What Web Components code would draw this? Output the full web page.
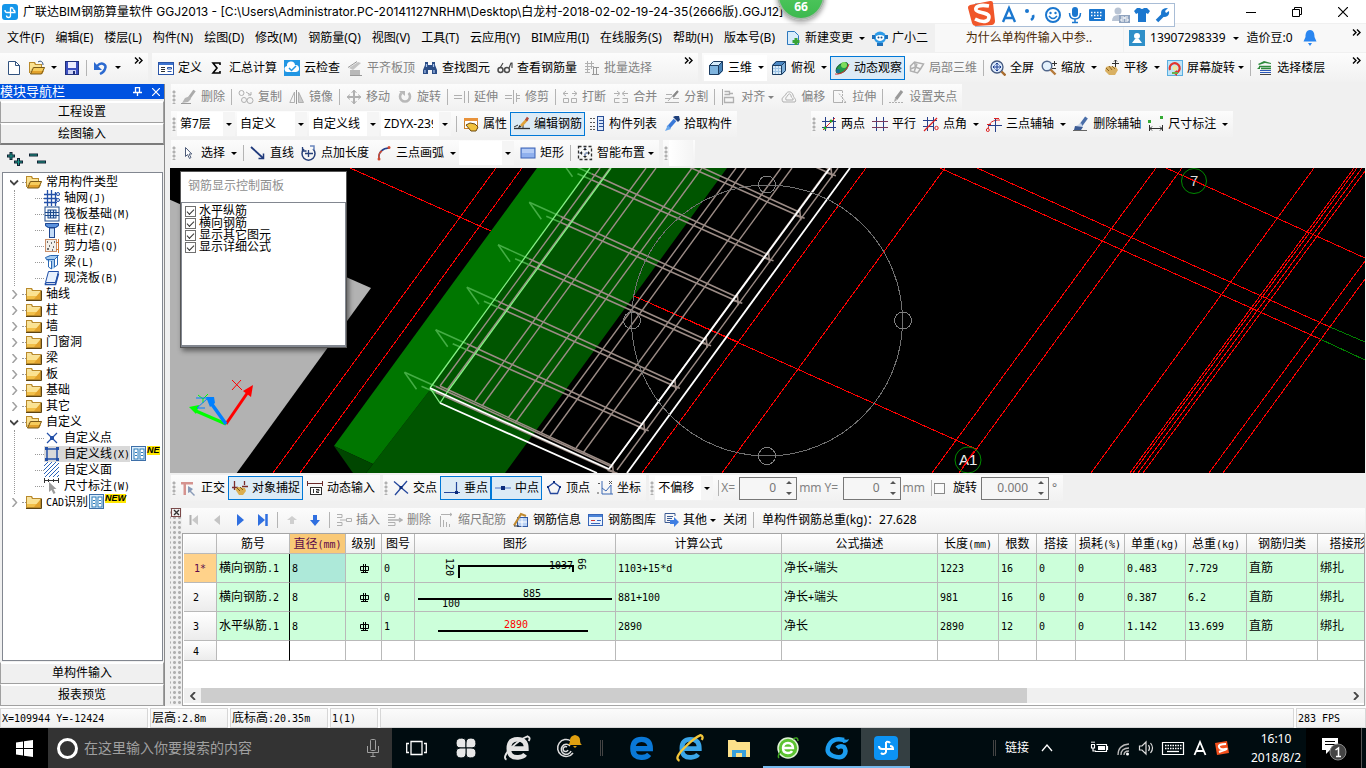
<!DOCTYPE html>
<html lang="zh-CN">
<head>
<meta charset="utf-8">
<title>广联达BIM钢筋算量软件 GGJ2013</title>
<style>
html,body{margin:0;height:100%}
body{display:flex;flex-direction:column;min-height:100vh;overflow:hidden;background:#f0f0f0;color:#000;font:12px/16px "Noto Sans","Noto Sans CJK SC",sans-serif;--sep:#b4b4b4}
main{flex:1;display:grid;grid-template-columns:165px minmax(0,1fr);gap:5px;min-height:0}
.work{display:flex;flex-direction:column;min-width:0;min-height:0}
.strip{display:flex;height:31px;flex:none;background:#f0f0f0}
.strip.files{display:grid;grid-template-columns:148px 546px 1fr;gap:4px}
.row{display:flex;box-sizing:border-box;gap:4px;height:27px;padding-left:1px;flex:none}
.row.far{gap:74px}
.row.tall{height:30px;padding-top:2px}
.row.snap{height:31px;margin-bottom:4px;gap:3px;padding-top:2px}
</style>
</head>
<body>
<title-bar></title-bar>
<menu-bar></menu-bar>
<div class="strip files">
  <tool-group plain more>
    <tool-button icon="new" title="新建"></tool-button><tool-button icon="open" title="打开" drop="wide"></tool-button><tool-button icon="save" title="保存"></tool-button><tool-sep></tool-sep><tool-button icon="undo" title="撤销" drop="wide"></tool-button>
  </tool-group>
  <tool-group plain more>
    <tool-button icon="define">定义</tool-button><tool-button icon="sum">汇总计算</tool-button><tool-button icon="cloud">云检查</tool-button><tool-button icon="flat" disabled>平齐板顶</tool-button><tool-button icon="binoc">查找图元</tool-button><tool-button icon="glasses">查看钢筋量</tool-button><tool-button icon="batch" disabled>批量选择</tool-button>
  </tool-group>
  <tool-group plain more>
    <tool-button icon="cube" drop="wide" field>三维</tool-button><tool-button icon="cube2" drop="wide">俯视</tool-button><tool-button icon="orbit" active>动态观察</tool-button><tool-button icon="part3d" disabled>局部三维</tool-button><tool-sep></tool-sep><tool-button icon="fit">全屏</tool-button><tool-button icon="zoom" drop="wide">缩放</tool-button><tool-button icon="pan" drop="wide">平移</tool-button><tool-button icon="turn" drop="tight">屏幕旋转</tool-button><tool-sep></tool-sep><tool-button icon="floors">选择楼层</tool-button>
  </tool-group>
</div>
<main>
  <nav-panel></nav-panel>
  <section class="work">
    <div class="row">
      <tool-group>
        <tool-button icon="brush" disabled>删除</tool-button><tool-sep></tool-sep><tool-button icon="copy" disabled>复制</tool-button><tool-button icon="mirror" disabled>镜像</tool-button><tool-sep></tool-sep><tool-button icon="move" disabled>移动</tool-button><tool-button icon="rotate" disabled>旋转</tool-button><tool-sep></tool-sep><tool-button icon="extend" disabled>延伸</tool-button><tool-button icon="trim" disabled>修剪</tool-button><tool-sep></tool-sep><tool-button icon="break" disabled>打断</tool-button><tool-button icon="join" disabled>合并</tool-button><tool-button icon="split" disabled>分割</tool-button><tool-sep></tool-sep><tool-button icon="align" drop="tight" disabled>对齐</tool-button><tool-button icon="offset" disabled>偏移</tool-button><tool-button icon="stretch" disabled>拉伸</tool-button><tool-sep></tool-sep><tool-button icon="grip" disabled>设置夹点</tool-button>
      </tool-group>
    </div>
    <div class="row far">
      <tool-group>
        <combo-box label="楼层" value="第7层" style="--w:58px"></combo-box><combo-box label="构件类型" value="自定义" style="--w:70px"></combo-box><combo-box label="构件" value="自定义线" style="--w:70px"></combo-box><combo-box label="构件名称" value="ZDYX-239" style="--w:70px"></combo-box><tool-sep></tool-sep><tool-button icon="props">属性</tool-button><tool-button icon="editbar" active>编辑钢筋</tool-button><tool-button icon="list">构件列表</tool-button><tool-button icon="picker">拾取构件</tool-button>
      </tool-group>
      <tool-group>
        <tool-button icon="twopt">两点</tool-button><tool-button icon="parallel">平行</tool-button><tool-button icon="ptangle" drop="wide">点角</tool-button><tool-button icon="threeaxis" drop="wide">三点辅轴</tool-button><tool-button icon="erase">删除辅轴</tool-button><tool-button icon="dim" drop="wide">尺寸标注</tool-button>
      </tool-group>
    </div>
    <div class="row tall">
      <tool-group>
        <tool-button icon="cursor" drop="wide">选择</tool-button><tool-sep></tool-sep><tool-button icon="line">直线</tool-button><tool-button icon="ptlen">点加长度</tool-button><tool-button icon="arc" drop="wide">三点画弧</tool-button><combo-box label="弧线方式" value="" style="--w:55px"></combo-box><tool-button icon="rect">矩形</tool-button><tool-sep></tool-sep><tool-button icon="smart" drop="tight">智能布置</tool-button>
      </tool-group>
      <tool-group blank></tool-group>
    </div>
    <model-view></model-view>
    <div class="row snap">
      <tool-group>
        <tool-button icon="ortho">正交</tool-button><tool-button icon="osnap" active>对象捕捉</tool-button><tool-button icon="dyn">动态输入</tool-button>
      </tool-group>
      <tool-group>
        <tool-button icon="cross">交点</tool-button><tool-button icon="perp" active>垂点</tool-button><tool-button icon="mid" active>中点</tool-button><tool-button icon="vertex">顶点</tool-button><tool-button icon="coord">坐标</tool-button>
      </tool-group>
      <tool-group>
        <combo-box label="偏移方式" value="不偏移" style="--w:58px"></combo-box><tool-sep></tool-sep><spin-field label="X=" value="0" unit="mm"></spin-field><spin-field label="Y=" value="0" unit="mm"></spin-field><tool-sep></tool-sep><rotate-field></rotate-field>
      </tool-group>
    </div>
    <rebar-panel></rebar-panel>
  </section>
</main>
<status-bar></status-bar>
<task-bar></task-bar>

<script>
const L = (d, c, w = 1, x = '') => `<path d="${d}" fill="none" stroke="${c}" stroke-width="${w}" ${x}/>`;
const F = (d, c, x = '') => `<path d="${d}" fill="${c}" ${x}/>`;
const R = (x, y, w, h, f, s) => `<rect x="${x}" y="${y}" width="${w}" height="${h}" fill="${f}" ${s ? `stroke="${s}"` : ''}/>`;
const C = (x, y, r, f, s = 'none', w = 1) => `<circle cx="${x}" cy="${y}" r="${r}" fill="${f}" stroke="${s}" stroke-width="${w}"/>`;
const G = '#b0b0b0', B = '#2a56b0', N = '#27408b', K = '#303030';
const folder = F('M0 2h6l1 2h8v10H0z', '#b98a2c') + F('M1 3h4l1 2h8v1H1z', '#f7e3a0') + F('M1 6h13v4H1z', '#fbe291') + F('M1 10h13v3H1z', '#f2c04a') + F('M8 13l6-7v7z', '#e2a22c') + L('M0 14.500h15.500V4.500', '#5d4412');
const folderOpen = F('M0 2h6l1 2h6v3H4L1 13H0z', '#b98a2c') + F('M1 3h4l1 2h6v2H4l-3 5z', '#fbe291') + F('M4 7h12l-3 7H1z', '#f6cc5c') + F('M3 11h12l-2 3H1z', '#e2a22c') + L('M4.500 7.500h11l-3 6.500h-11z', '#7a5a18');
const cube = (a, b, c) => F('M1 5l4-4h10l-4 4z', a) + F('M1 5h10v10H1z', b) + F('M11 5l4-4v10l-4 4z', c) + L('M1.500 5.500h9v9h-9zM1.500 5.500l4-4h9l-4 4M14.500 1.500v9l-4 4', '#1c3c60');
const ICONS = {
  logo: `<rect width="16" height="16" rx="3" fill="#1496ea"/>` + L('M8.500 3.500v8a2 2 0 0 1-4 0M3 6q0 2.500 2 2.500h8q0-2.500-2-2.500M8.500 3.500q3 0 2.500 2', '#fff', 1.300),
  new: F('M2 1h8l4 4v10H2z', '#fff') + L('M2.500 1.500h7l4 4v9h-11zM9.500 1.500v4h4', '#31527f'),
  open: folderOpen + L('M9 2c3-2 5 0 5 3', '#31527f'),
  save: R(1.5, 1.5, 13, 13, '#3c4fc0', '#20307c') + R(4, 2, 8, 6, '#eef') + R(4, 10, 8, 4, '#cdd3f4') + R(9, 11, 2, 3, '#20307c'),
  undo: L('M4 6c5-5 10-1 8 3-1 3-3 4-5 5', '#2c6ad0', 2.400) + F('M1 2v8h8z', '#2c6ad0'),
  define: R(.5, 2.5, 15, 12, '#fff', '#2b55a8') + R(1, 3, 14, 2, '#3d73cf') + L('M3 7.500h4M3 9.500h4M3 11.500h4', K) + L('M9.500 7.500h4v1.500h-4zM9.500 11.500h4', '#2b55a8'),
  sum: L('M11 5V3H4l4 5-4 5h7v-2', '#000', 1.600),
  cloud: R(0, 0, 16, 16, '#2196e3') + F('M4 12a3 3 0 0 1-1-6 4 4 0 0 1 8-1 3.500 3.500 0 0 1 1 7z', '#fff') + L('M5 8l2.500 2.500L12 6', '#2196e3', 1.500),
  flat: F('M2 8l9-6 3 1-8 7z', '#c4c4c4') + R(3, 10, 10, 5, '#b9b9b9') + L('M1 7.500l9-6M3 15.500h12', '#999'),
  binoc: F('M3 2h3v3h4V2h3v3l2 5v4h-5v-4H6v4H1v-4l2-5z', '#2b4d86') + L('M3 10v3M12 10v3M4.500 4v3M11.500 4v3', '#a9c4ee', 1.200),
  glasses: C(3.500, 10, 2.500, 'none', '#4a4a4a', 1.500) + C(10, 10, 2.500, 'none', '#4a4a4a', 1.500) + L('M3 8l3-5M12 8l2-5 1 0v5', '#4a4a4a', 1.200),
  batch: L('M1 3.500h9M1 6.500h9M1 9.500h5M3.500 1v11M7.500 1v8M1 12.500h5', G) + L('M9.500 7v7M12.500 7v7M8 14.500h7M9 7.500h6', '#999'),
  cube: cube('#d6ecfa', '#7fb4de', '#4a84b8'), cube2: cube('#4b88c4', '#d9ebf8', '#7fb0da') + L('M4.500 6v8M7.500 6v8M2 8.500h8M2 11.500h8', '#9ec4e6'),
  orbit: `<ellipse cx="8" cy="8" rx="7" ry="4" transform="rotate(-40 8 8)" fill="#229a4c" stroke="#0c5f2a"/>` + C(10, 5, 3, '#7ddc5c') + L('M1 14c5 1 12-3 14-10', '#d33') + C(4, 11, 2, '#186d9c'),
  part3d: L('M1.500 6l4-4 9 2-3 5-3 4-7-2zM5.500 2l1 5 5 2M1.500 9l5-2M8 4l-3 8', G, 1.500),
  fit: C(7, 7, 6, '#dce9fb', '#44597f', 1.300) + L('M7 3v8M3 7h8M5.500 4.500L7 3l1.500 1.500M5.500 9.500L7 11l1.500-1.500M4.500 5.500L3 7l1.500 1.500M9.500 5.500L11 7 9.500 8.500', '#1c3f94') + L('M11.500 11.500l4 4', '#a86c2e', 2.400),
  zoom: C(6, 6, 4.800, '#e4f1fc', '#51678c', 1.400) + L('M9.500 9.500l5 5', '#b57939', 2.400) + L('M11 3.500h5M13.500 1v5M11 8.500h4', '#333'),
  pan: F('M2 7l3-1 7 1 2 3-3 5H5L1 11z', '#d9b062') + L('M2 8l3 3M5 6l3 4M8 6l3 3', '#8c6523') + L('M11.500 0v7M8 3.500h7M10 1.500l1.500-1.500L13 1.500', K),
  turn: R(.5, .5, 15, 15, '#bfe4f7', '#5aaee0') + L('M3 10a5 5 0 1 1 6 3', '#e2342b', 2.200) + F('M10 10l-4 3 4 3z', '#e2342b') + C(8, 8, 2.500, '#f0e8a0') + F('M5 12h6v2H5z', '#6ab04c'),
  floors: F('M1 4l6-3 7 2v1l-6-1-6 2z', '#2f8a3c') + L('M2 6.500h12M4 8.500h10', '#2f8a3c', 1.400) + L('M3 10.500h11M3 12.500h11', '#2b58b8') + L('M3 14.500h11', '#444') + F('M0 9l3-3v3z', '#2f8a3c'),
  brush: L('M13.500 1.500l-5 7', '#aaa', 3) + F('M9 7L4 9l-3 5 6-1 3-3z', '#b5b5b5') + L('M0 14.500h10', '#9a9a9a'),
  copy: C(3.500, 4, 2.500, 'none', G) + C(6, 11, 2.500, 'none', G) + C(12, 11.500, 3, 'none', G) + L('M8 3l5 3M13 3v3h-3', G),
  mirror: L('M5.500 3v10.500H.8z', G) + L('M7.500 1v14', '#999') + F('M9.500 3v10.500h5z', '#ccc') + L('M9.500 3v10.500h5z', G),
  move: L('M8 2v12M2 8h12', G, 2) + L('M5.500 4L8 1l2.500 3M5.500 12L8 15l2.500-3M4 5.500L1 8l3 2.500M12 5.500L15 8l-3 2.500', G),
  rotate: L('M4.500 4a5 5 0 1 0 7 0', '#b8b8b8', 2.600) + F('M2 2h6v5z', '#b8b8b8'),
  extend: L('M0 6.500h8M0 9.500h8M10.500 2v12M14.500 2v12', G),
  trim: L('M0 6.500h7M0 9.500h7M8.500 1v14M11.500 4v9M12 6.500h3M12 9.500h3', G),
  break: L('M1 4.500h5M4 2l-3 2.500L4 7M10 4.500h5M12 2l3 2.500L12 7', G) + L('M1.500 9.500h5v4h-5zM14.500 9.500h-5v4h5z', G),
  join: L('M1 4.500h5M4 2l3 2.500L4 7M10 4.500h5M12 2L9 4.500 12 7', G) + L('M6.500 9.500h-5v4h5M9.500 9.500h5v4h-5', G),
  split: L('M1 13.500h14M1 9.500h5M9 9.500h6M13 2L4 12M2 5.500h6', G) + L('M14 2L9 8', '#888', 2),
  align: L('M1.500 0v16', '#aaa') + L('M3.500 2.500h5v3h-5M3.500 8.500h9v5h-9zM12 4.500H8', G, 1.300),
  offset: L('M2 13c-3-5 2-5 3-8s6-3 7 1 4 4 2 7z', G) + L('M5 11c-1-3 1-3 2-5s3-1 3 1 3 2 2 4z', G),
  stretch: L('M1.500 13.500v-12h9M1.500 13.500h9', G) + L('M10.500 2v11M7 4.500l7 9M6 13.500h9', G, 1, 'stroke-dasharray="2 1"'),
  grip: L('M0 13.500h15', G, 1, 'stroke-dasharray="2 1"') + L('M13 2L7 10', '#999', 3) + F('M6 9l-1 4 3-2z', '#aaa'),
  props: R(1.5, 2.5, 13, 10, '#fff', '#c9822e') + R(1, 2, 14, 3, '#e8923a') + F('M3 9l4-2 5 1 3 3-2 4H8z', '#f2c23c') + L('M3 9l4-2 5 1 3 3-2 4H8z', '#6d4a12'),
  editbar: L('M0 12.500h16', K, 1.300) + L('M0 11l4-2M9 12V9', K) + L('M13.500 3L7 10', '#e0a33c', 2.600) + L('M14 1.500l-2 3', '#b34a3a', 2.600) + F('M4 12l1.500-3 2 2z', '#222'),
  list: R(8.5, .5, 6, 14, '#dce8fa', '#2a4f96') + L('M10 4.500h4M10 7.500h4M10 10.500h4', '#2a4f96') + L('M1 2.500h5M1 6.500h5M1 10.500h5M1 13.500h5', '#555', 1, 'stroke-dasharray="2 1"'),
  picker: L('M11 4L4 12', '#3878d8', 3.500) + F('M9 1l5 5 2-2-1-4-3-.5z', '#1e3f7a') + F('M4 9l-3 6 6-2z', '#6aa8ec'),
  twopt: L('M4.500 1v14M12.500 1v14M1 5.500h14M1 11.500h14', N) + L('M2 14L14 2', '#d22') + C(10, 5, 1.500, '#2a2') + C(4, 12, 1.500, '#2a2'),
  parallel: L('M4.500 1v14M11.500 1v14', N) + L('M0 5.500h16M0 11.500h16', '#7a3a5a'),
  ptangle: L('M4.500 1v14M10.500 1v14M0 4.500h14M0 10.500h10', N) + L('M1 15L14 2', '#d22', 1.300) + C(13.500, 12, 1.700, 'none', '#d22'),
  threeaxis: L('M2 13C3 6 7 4 14 4', '#d22') + L('M9.500 2v14M2 9.500h14', N) + L('M1 8.500h4M8 2.500h5', '#d22') + C(1.800, 14, 1.500, 'none', '#d22'),
  erase: L('M13.500 1.500L8 9', '#4a6ea8', 3.400) + F('M8 7l-5 3 1 3 6-2z', '#c9d6ea') + F('M2 10l-1 4 7 0 2-3z', '#3b5b94') + L('M0 14.500h14', '#666'),
  dim: L('M1.500 9v6M14.500 9v6M2 12.500h12M4 10.500l-2 2 2 2M12 10.500l2 2-2 2', K) + R(0, 4, 3, 3, '#3a3') + R(12, 0, 3, 3, '#3a3'),
  cursor: F('M4 2v10l2.500-2 2 4 1.500-1-2-3.500h3z', '#fff') + L('M4.500 2.500v9l2-2 2 4 1.500-1-2-3.500h2.800z', '#4d5b78'),
  line: L('M1 2l12 11', '#203a7c', 1.800) + L('M8.500 13.500h5v-5', '#203a7c', 1.500),
  ptlen: L('M3 4a6.500 6.500 0 1 0 9 0', '#27407a', 1.500) + L('M1.500 2v4h4M7.500 5v7M4 8.500h8', '#27407a', 1.300) + L('M9 1h4v4', '#6a86bd', 1.500),
  arc: L('M3 14C2 7 7 3 13 3', '#25408a', 1.500) + L('M3 14C2 10 4 7 6 6', '#d24a30', 1.500) + C(13, 2.500, 1.500, '#d24a30') + C(3, 14, 1.500, '#d24a30'),
  rect: R(1, 3, 14, 10, '#8fb0ee', '#3c62b4') + R(2, 4, 12, 4, '#b4cbf6'),
  smart: L('M1.500 1.500h13v13h-13z', K, 1.300, 'stroke-dasharray="3 2"') + L('M8 2.500v11M2.500 8h11', '#1e3f7a', 1, 'stroke-dasharray="3 3"') + F('M6 5h4L8 3zM6 11h4l-2 2zM5 6v4L3 8zM11 6v4l2-2z', '#222'),
  ortho: F('M0 2h12v2.500H5V15H2.500V4.500H0z', '#d5938f') + F('M7 6v7l2-1 4 4 1-1-4-4 2-2z', '#8a9bb8'),
  osnap: L('M2.500 1v9M12.500 1v4M0 7.500h6M10 6.500h6', '#7b2e2e', 1.300) + F('M3 9l3-2 7 1 1 3-3 4H7z', '#dcae50') + L('M5 8l3 3M8 7l3 3', '#7c5a1b'),
  dyn: L('M0 3.500h16M.500 1v5M15.500 1v5', '#6b2a2a') + R(3.5, 7.5, 11, 7, '#fff', K) + L('M6.500 9v4M9 9.500h3v1.500h-2.500v1.500H12', K),
  cross: L('M1 1.500l14 12M14 1l-12 14', '#25479c', 1.300) + R(6.500, 6, 3, 3, '#0c2c7c'),
  perp: L('M0 12.500h16M12.500 2v10', '#25479c', 1.200) + R(11, 11, 3, 3, '#0c2c7c'),
  mid: L('M0 8h16', '#4b72c4', 1) + R(6, 6, 4, 4, '#0c2c7c'),
  vertex: L('M8 2.500l6 4.500-2.500 6.500h-7L2 7z', '#25479c', 1.300) + R(7, 1, 2, 2, '#0c2c7c') + R(1, 6, 2, 2, '#0c2c7c') + R(13, 6, 2, 2, '#0c2c7c'),
  coord: L('M5 1v13h11M5 8l4 3 5-6v9', '#3a68b4') + L('M1 3l1 1 1-1M0 13h2M12 1l3 3M15 1l-3 3', '#555'),
  first: L('M4.500 3v10', G, 2) + F('M12 3v10L6 8z', '#c8c8c8'), prev: F('M11 3v10L5 8z', '#c4c4c4'),
  next: F('M5 2v12l7-6z', '#2f6fe0'), last: F('M3 2v12l7-6z', '#2f6fe0') + L('M11.500 2v12', '#2f6fe0', 2.500),
  up: F('M8 4l5 4h-3v4H6V8H3z', '#cfcfcf'), down: F('M8 14L3 8h3V3h4v5h3z', '#2f6fe0'),
  insrow: L('M1 2.500h5v3H1M1 10.500h5v3H1M4 8h3M10.500 6.500h5v3h-5zM7 8h3', G), delrow: L('M1 2.500h7v3H1M1 10.500h7v3H1', G) + L('M1 8h14M12 6l3 2-3 2', G, 1.400),
  scale: L('M2.500 4v11M5.500 8v7M8.500 10v5M11.500 12v3M3 2.500h11M12 1l2 1.500L12 4', G),
  info: R(4.5, 5.5, 10, 9, '#b9d1f4', '#3159a3') + L('M9 6v9M5 10h9', '#fff') + L('M1 13.500L8 2l5 2', '#c08a30', 2.200) + L('M1 14h5', '#333'),
  lib: R(.5, 2.5, 14, 11, '#eaf2fd', '#3766b8') + R(1, 3, 13, 2, '#4c84d8') + L('M3 8.500h4', '#c33') + L('M9 8.500h4M3 11.500h9', '#3766b8'),
  other: L('M12 4v-2.500h-10v9h5M4 4.500h6M4 6.500h5M4 8.500h3', '#3c5b94') + F('M7 8h4V5l5 5-5 5v-3H7z', '#3f7ee2'),
  grid: L('M0 4.500h16M0 8.500h13M0 12.500h13M3.500 0v16M7.500 0v16M11.500 2v14', '#2350a8', 1.300) + C(14, 4, 1.500, '#fff', '#2350a8') + C(14, 10, 1.500, '#fff', '#2350a8'),
  raft: R(1, 1, 14, 14, '#fff', '#1d4a8c') + R(4, 4, 8, 8, '#cfe0f4', '#1d4a8c') + L('M6.500 4v8M9.500 4v8M1 6.500h14M1 9.500h14', '#1d4a8c'),
  column: F('M1 1h14v3l-3 2H4L1 4z', '#5b92dd') + L('M1.500 1.500h13v2l-3 2h-7l-3-2z', '#1e4690') + R(5.5, 6, 5, 9.500, '#c3dcf8', '#1e4690'),
  wall: R(1.5, 1.5, 11, 12, '#f1efe9', '#c98f6a') + L('M3 4h1M7 5h1M5 8h1M9 9h1M3 11h2M8 12h1M10 4h1', '#444', 1.400) + L('M14.500 1v14M12 4.500h3M12 11.500h3', '#d27b32'),
  beam: F('M1 4l5-3h9l-4 4v9l-3 1V8L3 7z', '#a7cbee') + L('M1.500 3.500l5-2h8l-4 4h-8zM4.500 6v7l3 2V7M10.500 5v8l3-2V3', '#2a68b4'),
  slab: F('M4 1h11l-3 12H1z', '#e7f1fd') + L('M4.500 1.500h10l-3 11h-10z', '#2350a8') + L('M1.500 13v1.500h10l3-11', '#2350a8', 1.600),
  pt: L('M3 3l10 10M13 3L3 13', '#2350a8', 1.200) + R(6, 6, 4, 4, '#2350a8'),
  ln: L('M3 3h10v10H3z', '#2350a8', 1.500) + [1, 12].map(x => [1, 12].map(y => R(x, y, 3, 3, '#2350a8')).join('')).join(''),
  area: L('M0 4l4-4M0 8l8-8M0 12l12-12M1 15L15 1M5 15L15 5M9 15l6-6M13 15l2-2', '#2a62b8'),
  dimw: L('M0 2.500h15M.500 0v5M14.500 0v5M4.500 1v3M9.500 1v3', '#333') + F('M5 4v10l2.500-2 2 4 2-1-2-4h3z', '#9a9a9a'),
  folder, folderOpen,
  book: R(.5, .5, 14, 14, '#dceefb', '#3d6fa8') + R(3, 3, 4, 10, '#fff', '#2a7ab8') + R(9, 3, 4, 10, '#fff', '#2a7ab8') + L('M4 6.500h2M4 9.500h2M10 6.500h2M10 9.500h2', '#2a7ab8'),
  adddoc: F('M2 1h8l4 4v10H2z', '#d8ecfb') + L('M2.500 1.500h7l4 4v9h-11z', '#2d78bd') + L('M11 8v7M7.500 11.500h7', '#36a336', 3),
  robot: C(8, 7.500, 6, '#2e9be8') + F('M4 6q4-2 8 0v3q-4 4-8 0z', '#fff') + C(6.500, 7.500, 1, '#17528a') + C(9.500, 7.500, 1, '#17528a') + F('M5 13h6v3H5zM0 5h3v4H0zM13 5h3v4h-3z', '#1f6fb8'),
  user: R(0, 0, 16, 16, '#2f8fc8') + C(8, 6, 3, '#fff') + F('M3 13l3-4h4l3 4z', '#fff'),
  bell: F('M8 0c4 0 4.500 4 4.500 7l2 4.500h-13l2-4.500C3.500 4 4 0 8 0zM6 13h4l-2 3z', '#2a86f0')
};

const sheetBase = `:host,*{box-sizing:border-box}button,input,select{font:inherit;color:inherit;margin:0}button{border:0;background:none;padding:0}svg{display:block}`;
const simsun = s => String(s).replace(/[\x20-\x7e]+/g, m => `<span class="m">${m}</span>`);
const mono = `.m{font:10px/12px "DejaVu Sans Mono",monospace;white-space:pre}`;
const attrs = (el, n, d = '') => el.getAttribute(n) ?? d;
function component(name, css, html) {
  customElements.define(name, class extends HTMLElement {
    connectedCallback() {
      if (this.shadowRoot) return;
      const t = document.createElement('template');
      t.innerHTML = `<style>${sheetBase}${css}</style>${typeof html === 'function' ? html(this) : html}`;
      this.attachShadow({ mode: 'open' }).append(t.content.cloneNode(true));
    }
  });
}
component('ui-icon', ':host{display:block;width:16px;height:16px;flex:none}',
  el => `<svg width="16" height="16" viewBox="0 0 16 16" aria-hidden="true">${ICONS[attrs(el, 'name')] || ''}</svg>`);

const arrowCss = `.arrow{border:3px solid transparent;border-top-color:currentColor;border-bottom:0;width:6px;height:0;flex:none}`;
component('tool-button', `:host{display:block;flex:none}
button{display:flex;align-items:center;height:26px;border:1px solid transparent;padding:0 2px 0 3px;white-space:nowrap;color:#000}
.txt{padding-left:4px}:host(:not([icon])) .txt{padding-left:0}.txt.none{display:none}
:host([disabled]) button{color:#838383}
:host([active]) button{background:#dcebf6;border-color:#0078d7;height:24px}
:host([field]) button{background:#fff}
${arrowCss}:host([drop=wide]) .arrow{margin:0 0 0 6px}:host([drop=tight]) .arrow{margin:0 0 0 3px}`,
  el => `<button type="button" ${el.hasAttribute('disabled') ? 'disabled' : ''} ${el.title ? `aria-label="${el.title}"` : ''}>${el.hasAttribute('icon') ? `<ui-icon name="${attrs(el, 'icon')}"></ui-icon>` : ''}<span class="txt ${el.textContent ? '' : 'none'}"><slot></slot></span>${el.hasAttribute('drop') ? '<span class="arrow"></span>' : ''}</button>`);
component('tool-sep', ':host{display:block;width:1px;height:16px;margin:0 2px 0 3px;background:var(--sep);flex:none}', '');
component('tool-group', `:host{display:flex;align-items:center;height:26px;padding-right:2px;background:linear-gradient(#fcfcfc,#f1f1f1);min-width:0}
:host([plain]){padding-left:2px;height:29px;padding-right:5px}
.grip{width:6px;height:14px;flex:none;background:radial-gradient(circle,#b0b0b0 1px,transparent 2px) 0 0/6px 4px}
.more{margin-left:auto;align-self:flex-start;padding-top:4px}
.blank{width:24px;height:26px;background:linear-gradient(90deg,#fff,#f4f4f4)}`,
  el => (el.hasAttribute('plain') ? '' : '<span class="grip"></span>') + '<slot></slot>' + (el.hasAttribute('blank') ? '<span class="blank"></span>' : '') +
    (el.hasAttribute('more') ? `<button class="more" aria-label="更多"><svg width="9" height="7" viewBox="0 0 9 7">${L('M1 .500l3 3-3 3M5 .500l3 3-3 3', '#000', 1.400)}</svg></button>` : ''));
component('combo-box', `:host{display:block;flex:none;width:var(--w);height:24px;position:relative;margin-right:2px}
select{appearance:none;width:100%;height:100%;border:0;border-radius:0;background:linear-gradient(90deg,#fff 0 calc(100% - 12px),#f5f5f5 0);padding:0 18px 0 3px;outline:0}
.arrow{position:absolute;right:3px;top:11px;pointer-events:none}${arrowCss}`,
  el => `<select aria-label="${attrs(el, 'label')}"><option>${attrs(el, 'value')}</option></select><span class="arrow"></span>`);
const spinner = (id, v, w) => `<span class="spin" style="width:${w}px"><input id="${id}" type="text" inputmode="decimal" value="${v}"><svg width="6" height="16" viewBox="0 0 6 16"><path d="M0 4l3-3 3 3zM0 12l3 3 3-3z" fill="#555"/></svg></span>`;
const spinCss = `.spin{display:flex;align-items:center;height:23px;border:1px solid #777;background:#f6f6f6;padding-right:4px;flex:none}.spin input{min-width:0;flex:1;width:0;border:0;background:none;text-align:right;padding:0 10px 0 0;color:#777}`;
component('spin-field', `:host{display:flex;align-items:center;gap:2px;color:#838383;margin-right:3px}label{width:16px;white-space:nowrap}${spinCss}`,
  el => `<label for="v">${attrs(el, 'label')}</label>${spinner('v', attrs(el, 'value'), 58)}<span>${attrs(el, 'unit')}</span>`);
component('rotate-field', `:host{display:flex;align-items:center;color:#000;margin-right:4px}input[type=checkbox]{appearance:none;width:11px;height:11px;border:1px solid #888;background:#fafafa}label{margin:0 4px 0 8px}.deg{margin-left:3px;color:#777}${spinCss}`,
  `<input type="checkbox" id="r"><label for="r">旋转</label>${spinner('a', '0.000', 68)}<span class="deg">°</span>`);

component('title-bar', `:host{display:flex;height:23px;flex:none;background:#fff;align-items:center;position:relative}
h1{font:12px/16px Inter,"Noto Sans CJK SC",sans-serif;margin:0 0 0 5px;flex:1;white-space:nowrap}ui-icon{margin-left:2px}
.win{width:46px;height:22px;display:grid;place-items:center}
.ball{position:absolute;left:777px;top:-30px;width:48px;height:50px;border-radius:50%;background:linear-gradient(#5fd36a,#3cb94e);border:2px solid #a9b7ab;box-shadow:0 2px 5px #0006;color:#fff;font:bold 12px/14px "Noto Sans",sans-serif;text-align:center;padding-top:28px;z-index:3}
.ime{position:absolute;left:967px;top:0;display:flex;align-items:center;z-index:3;width:208px;height:27px}
.ime .bar{position:absolute;inset:3px 0 0 8px;border:1px solid #a9bdd6;background:#fff}
.ime svg{position:relative}`,
  () => `<ui-icon name="logo"></ui-icon><h1>广联达BIM钢筋算量软件 GGJ2013 - [C:\\Users\\Administrator.PC-20141127NRHM\\Desktop\\白龙村-2018-02-02-19-24-35(2666版).GGJ12]</h1>
<div class="ball">66</div>
<div class="ime"><div class="bar"></div><svg width="206" height="27" viewBox="0 0 206 27">
<path d="M3 5L23 1q3-.500 3 2l2 18q0 3-3 4L9 26q-3 0-4-3L1 8q-.500-2 2-3z" fill="#f0562a"/>${L('M22 6C12 4 8 7 9 10s13 2 13 7-6 6-14 2', '#fff', 3.600)}
<g fill="none" stroke="#1b77cf" stroke-width="2.400">${'<path d="M36 22l6-14 6 14M38 18h8"/>'}</g>
${C(60, 11, 2, '#1b77cf')}${L('M66 15q1 3-2 5', '#1b77cf', 2.600)}
${C(86, 15, 7, 'none', '#1b77cf', 2)}${C(83.500, 13, 1.200, '#1b77cf')}${C(88.500, 13, 1.200, '#1b77cf')}${L('M82 16q4 5 8 0', '#1b77cf', 1.500)}
<rect x="105" y="7" width="6" height="10" rx="3" fill="#1b77cf"/>${L('M102.500 13q0 6 5.500 6t5.500-6M108 19v3M105 22.500h6', '#1b77cf', 1.500)}
<rect x="122" y="9" width="16" height="12" rx="1" fill="#1b77cf"/>${L('M124 12.500h12M124 15.500h12', '#fff', 1.500, 'stroke-dasharray="1.500 1.500"')}${L('M127 18.500h7', '#fff')}
${C(151, 11, 3.500, '#b9c4d4')}${F('M145 21q0-6 6-6 3 0 4 1v5z', '#b9c4d4')}${R(152, 15, 11, 8, '#8fa3bf')}${L('M154 17h3v2h-3v2h3M161 17h-3v2h3v2h-3', '#fff')}
${F('M170 8h3q2 2 4 0h3l3 3-2 3-2-1v9h-8v-9l-2 1-2-3z', '#1b77cf')}
${L('M190 21l6-6', '#1b77cf', 3.500)}${F('M201 8l-3 3 1 2 3-2q1 5-4 6-4 0-4-4 0-5 7-5z', '#1b77cf')}</svg></div>
<button class="win" aria-label="最小化"><svg width="10" height="10">${L('M0 5.500h10', '#000')}</svg></button>
<button class="win" aria-label="还原"><svg width="10" height="10">${L('M.500 2.500h7v7h-7zM2.500 2.500v-2h7v7h-2', '#000')}</svg></button>
<button class="win" aria-label="关闭"><svg width="10" height="10">${L('M0 0l10 10M10 0L0 10', '#000', 1.200)}</svg></button>`);

component('menu-bar', `:host{display:flex;height:30px;flex:none;align-items:center;background:#f0f0f0}
nav{display:flex;gap:11px;padding-left:7px;flex:none}button{white-space:nowrap}
.tools{display:flex;align-items:center;margin-left:6px;flex:none}
.ask{flex:0 1 188px;margin-left:4px;height:28px;background:#f8f8f8;text-align:center;color:#4b2a06;line-height:28px;white-space:nowrap;text-decoration:none}
.acct{flex:1;display:flex;align-items:center;gap:5px;height:28px;padding:0 5px;background:#f8f8f8;margin-left:1px}
.acct .arrow{margin:0 3px 0 2px}.acct ui-icon:last-of-type{margin-left:4px}.more{margin-left:auto;align-self:flex-start;padding-top:5px}${arrowCss}`,
  () => `<nav>${['文件(F)', '编辑(E)', '楼层(L)', '构件(N)', '绘图(D)', '修改(M)', '钢筋量(Q)', '视图(V)', '工具(T)', '云应用(Y)', 'BIM应用(I)', '在线服务(S)', '帮助(H)', '版本号(B)'].map(t => `<button>${t}</button>`).join('')}</nav>
<div class="tools"><tool-button icon="adddoc" drop="wide">新建变更</tool-button><tool-button icon="robot">广小二</tool-button></div>
<a class="ask" href="#">为什么单构件输入中参..</a>
<div class="acct"><ui-icon name="user"></ui-icon><span>13907298339</span><span class="arrow"></span><span>造价豆:0</span><ui-icon name="bell"></ui-icon><button class="more" aria-label="更多"><svg width="9" height="7" viewBox="0 0 9 7">${L('M1 .500l3 3-3 3M5 .500l3 3-3 3', '#000', 1.400)}</svg></button></div>`);

const TREE = [['常用构件类型', 'o', [['grid', '轴网(J)'], ['raft', '筏板基础(M)'], ['column', '框柱(Z)'], ['wall', '剪力墙(Q)'], ['beam', '梁(L)'], ['slab', '现浇板(B)']]],
  ['轴线'], ['柱'], ['墙'], ['门窗洞'], ['梁'], ['板'], ['基础'], ['其它'],
  ['自定义', 'o', [['pt', '自定义点'], ['ln', '自定义线(X)', 'NE'], ['area', '自定义面'], ['dimw', '尺寸标注(W)']]], ['CAD识别', '', [], 'NEW']];
component('nav-panel', `:host{display:flex;flex-direction:column;min-height:0;border-right:1px solid #8a8a8a}
header{display:flex;align-items:center;height:15px;background:#0052e0;color:#fff;font-size:13px;line-height:15px;gap:10px;padding-right:4px;margin-bottom:2px;flex:none}header span{flex:1}
.tab{height:22px;flex:none;border:1px solid #a0a0a0;border-top-color:#fff;background:#f0f0f0;box-shadow:inset 0 1px #fff}
.tab.on{border-bottom:2px solid #7b7b7b}
.plus{height:27px;flex:none;padding:5px 6px}
ul{list-style:none;margin:0;padding:0}
.tree{flex:1;min-height:0;border:1px solid #828790;background:#fff;margin:0 1px 1px 2px;padding:1px 0 0 4px;overflow:hidden}
.r{display:flex;align-items:center;height:16px;white-space:nowrap;gap:4px}
.tw{width:15px;flex:none;margin-right:-4px}.tw svg{margin:0 auto}
.r i{width:4px;border-top:1px dotted #999;margin-right:-4px;flex:none}
li>ul{margin-left:7px;border-left:1px dotted #999;padding-left:20px}
li>ul .r i{width:9px}
.sel .t,.sel i+ui-icon{background:#d9d9d9}.sel .t{margin-left:-4px;padding-left:4px}
.new{font:bold italic 9px/9px "Liberation Sans",sans-serif;background:#ffe600;align-self:flex-start;margin-left:-4px}
.t+ui-icon{margin-left:-3px}${mono}`,
  () => {
    const flag = n => n ? `<ui-icon name="book"></ui-icon><span class="new">${n}</span>` : '';
    const top = ([t, o, kids, n]) => `<li><div class="r"><span class="tw"><svg width="9" height="9">${o ? L('M0 2.500l4 4 4-4', '#444', 1.800) : L('M2.500 0l4 4.500-4 4.500', '#a0a0a0', 1.500)}</svg></span><i></i><ui-icon name="${o ? 'folderOpen' : 'folder'}"></ui-icon><span class="t">${simsun(t)}</span>${flag(n)}</div>${kids && kids.length ? `<ul>${kids.map(([i, k, f]) => `<li class="r ${f ? 'sel' : ''}"><i></i><ui-icon name="${i}"></ui-icon><span class="t">${simsun(k)}</span>${flag(f)}</li>`).join('')}</ul>` : ''}</li>`;
    return `<header><span>模块导航栏</span><svg width="9" height="9">${L('M2.500 0v5M6.500 0v5M2 .500h5M0 5.500h9M4.500 6v3', '#fff', 1.300)}</svg><svg width="8" height="8">${L('M0 0l8 8M8 0L0 8', '#fff', 1.200)}</svg></header>
<button class="tab">工程设置</button><button class="tab on">绘图输入</button>
<div class="plus"><svg width="42" height="18">${L('M1 6h8M5 2v8M8 12h9M12.500 8v8M23 5h9M31 12h9', '#123', 3)}${L('M2 6h6M5 3v6M9 12h7M12.500 9v6M24 5h7M32 12h7', '#1d9a8c', 1)}</svg></div>
<ul class="tree">${TREE.map(top).join('')}</ul><button class="tab">单构件输入</button><button class="tab">报表预览</button>`;
  });

component('check-panel', `:host{display:flex;flex-direction:column;background:#fff;border:1px solid #555;width:167px;height:177px;box-shadow:2px 3px 5px #0007}
h2{font:inherit;color:#8f8f8f;margin:0;padding:6px 7px 8px}
.box{flex:1;border:2px solid #828790;border-width:1px 1px 2px 1px;padding:2px 0 0 3px}
label{display:flex;align-items:center;height:12px;gap:3px;line-height:12px}
input{appearance:none;width:11px;height:11px;border:1px solid #707070;background:#fff;display:grid;place-items:center}
input:checked::after{content:"";width:6px;height:3px;border:solid #333;border-width:0 0 1px 1px;transform:rotate(-45deg)}`,
  `<h2>钢筋显示控制面板</h2><div class="box">${['水平纵筋', '横向钢筋', '显示其它图元', '显示详细公式'].map(t => `<label><input type="checkbox" checked>${t}</label>`).join('')}</div>`);

component('model-view', `:host{display:block;position:relative;flex:1;min-height:0;background:#000;margin-right:1px;overflow:hidden}
svg{width:100%;height:100%}check-panel{position:absolute;left:10px;top:3px}text{font:15px "Liberation Sans",sans-serif}`,
  () => {
    const ln = (a, c, w = 1) => a.map(([x1, y1, x2, y2]) => `<path d="M${x1} ${y1}L${x2} ${y2}" stroke="${c}" stroke-width="${w}"/>`).join('');
    const red = [[350, 168, 491, 231], [634, 296, 976, 449], [496, 168, 273, 473], [522, 168, 300, 473], [866, 168, 642, 473], [945, 168, 722, 473], [1156, 168, 932, 473], [1182, 168, 959, 473], [1314, 168, 1091, 473], [1354, 168, 1130, 473], [1357, 168, 1133, 473], [1362, 168, 1138, 473], [1365, 171, 1143, 473], [1365, 261, 1209, 473], [1365, 279, 1223, 473], [940, 168, 1320, 339], [977, 168, 1330, 327], [1166, 168, 1365, 258]];
    const bars = [], hooks = [];
    for (let k = -4; k < 5; k++) {
      const x = 529.3 - k * 31.2, y = 202.3 + k * 42.5;
      bars.push([x + 31, y + 14, x + 208, y + 95], [x + 31, y + 20, x + 210, y + 100], [x + 203, y + 98, x + 213, y + 101], [x + 208, y + 92, x + 209, y + 103]);
      hooks.push([x, y, x + 31, y + 14], [x + 17, y + 14, x + 31, y + 20], [x, y, x + 12, y + 17]);
    }
    const long = [[440, 386, 600, 168], [447, 390, 610, 168], [475, 401, 646, 168], [482, 406, 656, 168], [508, 418, 692, 168], [515, 423, 702, 168], [541, 433, 736, 168], [549, 438, 746, 168], [576, 448, 781, 168], [583, 453, 792, 168], [612, 465, 829, 168], [617, 470, 838, 168], [440, 386, 611, 465]];
    const c = (x, y, r, s) => C(x, y, r, 'none', s);
    return `<svg viewBox="170 168 1195 305" preserveAspectRatio="xMinYMin slice" aria-label="三维模型"><rect x="170" y="168" width="1195" height="305"/>
<path d="M170 199.700L371 288 236.700 473H170z" fill="#b2b2b2"/><g fill="none" shape-rendering="crispEdges">${ln(red, '#f00')}${ln([[1320, 339, 1365, 360], [1330, 327, 1365, 342]], '#008000')}</g>
<path d="M590 168h137L505 473H366l7-9 57-74z" fill="#005500"/><path d="M537 168h53L430 390l-57 74-39-18z" fill="#007600"/><path d="M334 446l39 18-7 9h-13z" fill="#004600"/>
<g shape-rendering="crispEdges">${ln([[634, 296, 738, 342]], '#f00')}</g>
<g>${ln(long, '#9c8c86', 1.400)}${ln(bars, '#9c8c86', 1.600)}${ln(hooks, '#45ad45', 1.500)}</g>
${ln([[430, 388, 590, 168], [448, 391, 611, 168], [430, 388, 440, 403], [440, 403, 448, 391]], '#86f086', 1.300)}
${ln([[430, 388, 609, 469], [609, 469, 830, 168], [440, 403, 597, 473], [627, 473, 850, 168]], '#fff', 1.800)}
<g shape-rendering="crispEdges">${c(767, 320.5, 135.5, '#707070')}${[[767, 184.5], [767, 456], [903, 320.5], [632, 320.5]].map(p => c(p[0], p[1], 8.500, '#808080')).join('')}</g>
${c(1194, 181, 12.500, '#008a00')}${c(968, 460, 13, '#008a00')}<text x="1190" y="186" fill="#ddd">7</text><text x="959" y="465" fill="#eee">A1</text>
${L('M1186 177l16 7M962 468l12-17', '#f00')}
${L('M226 424l22-32', '#f00', 3)}${F('M253 385l-2 12-8-6z', '#f00')}${L('M226 424l-30-13', '#0f0', 3)}${F('M189 407l10-2-3 9z', '#0f0')}${L('M226 424l-15-21', '#0080ff', 3.500)}${F('M206 397l8 0 1 6-5 4z', '#0080ff')}
${L('M232 380l10 10M241 380l-9 10', '#f00')}${L('M198 395l5 4 5-5M203 399v4', '#0f0')}${L('M196 398h12l-11 10h8', '#0080ff')}</svg><check-panel></check-panel>`;
  });

const COLS = [33, 73, 56, 36, 33, 201, 166, 156, 61, 38, 39, 49, 61, 61, 71, 72];
const HEAD = ['', '筋号', '直径(mm)', '级别', '图号', '图形', '计算公式', '公式描述', '长度(mm)', '根数', '搭接', '损耗(%)', '单重(kg)', '总重(kg)', '钢筋归类', '搭接形式'];
const grade = `<svg class="g" width="11" height="11" viewBox="0 0 11 11" aria-label="三级钢">${L('M1.500 3.500h8v4h-8zM4.500 1v9M6.500 1v9M2 9.500h7', '#000')}</svg>`;
const shape = [
  `<svg width="200" height="28">${L('M44 24V12h114v6', '#000', 2)}<text x="134" y="15">1037</text><text transform="translate(31 4) rotate(90)">120</text><text transform="translate(163 4) rotate(90)">66</text></svg>`,
  `<svg width="200" height="28">${L('M3 16h194', '#000', 2)}<text x="108" y="14">885</text><text x="27" y="24">100</text></svg>`,
  `<svg width="200" height="28">${L('M23 19h150', '#000', 2)}<text x="89" y="16" fill="#f00">2890</text></svg>`];
const ROWS = [['1*', '横向钢筋.1', '8', grade, '0', shape[0], '1103+15*d', '净长+端头', '1223', '16', '0', '0', '0.483', '7.729', '直筋', '绑扎'],
  ['2', '横向钢筋.2', '8', grade, '0', shape[1], '881+100', '净长+端头', '981', '16', '0', '0', '0.387', '6.2', '直筋', '绑扎'],
  ['3', '水平纵筋.1', '8', grade, '1', shape[2], '2890', '净长', '2890', '12', '0', '0', '1.142', '13.699', '直筋', '绑扎']];
component('rebar-table', `:host{display:block;overflow:hidden}
table{border-collapse:separate;border-spacing:0;table-layout:fixed;width:1206px}
td,th{border:solid #b9b9b9;border-width:0 1px 1px 0;padding:0 0 0 2px;font-weight:400;text-align:left;white-space:nowrap;overflow:hidden;line-height:14px}
thead th{height:20px;text-align:center;background:linear-gradient(#fff,#f0f0f0);padding:0}
thead th:nth-child(3){background:#f9c977;color:#5c0a4a}
tbody tr{background:#ccffda}td{height:29px}tbody th{background:linear-gradient(#fff,#ececec);text-align:center;padding:0 8px 0 0}
tbody tr:first-child th{background:#ffd28a;color:#5c0a4a;padding:0}tbody tr:first-child td:nth-child(3){background:#ade9d9}
tr.e{background:#fff}tr.e td,tr.e th{height:20px}
td:nth-child(2){border-right-color:#000}.g{margin:0 auto}td:nth-child(6){padding:0}text{font:10px "DejaVu Sans Mono",monospace}${mono}`,
  () => `<table><colgroup>${COLS.map(w => `<col style="width:${w}px">`).join('')}</colgroup><thead><tr>${HEAD.map(h => `<th>${simsun(h)}</th>`).join('')}</tr></thead><tbody>${ROWS.map(r => `<tr>${r.map((v, i) => i ? `<td>${v.startsWith('<') ? v : simsun(v)}</td>` : `<th>${simsun(v)}</th>`).join('')}</tr>`).join('')}<tr class="e"><th>${simsun('4')}</th>${'<td></td>'.repeat(15)}</tr></tbody></table>`);
component('rebar-panel', `:host{display:grid;grid-template-columns:12px minmax(0,1fr);height:198px;flex:none;margin-right:1px}
.side{background:radial-gradient(circle,#b0b0b0 1px,transparent 2px) 2px 12px/5px 5px;padding-left:1px}.side button{width:10px;height:9px;background:#f0f0f0;border:1px solid #7b4a4a;display:grid;place-items:center}
.col{display:flex;flex-direction:column;min-width:0}
.bar{display:flex;align-items:center;height:24px;margin-bottom:1px;background:linear-gradient(#fcfcfc,#f1f1f1);flex:none;white-space:nowrap}
.total{margin-left:6px}
.frame{flex:1;border:1px solid #a5a5a5;background:#fff;display:flex;flex-direction:column;padding-left:1px;padding-bottom:2px;min-height:0}
.scroll{margin-top:auto;height:15px;display:flex;background:#f0f0f0;align-items:center;justify-content:space-between}
.thumb{flex:0 0 70%;height:15px;background:#cdcdcd;margin-right:auto}.scroll button{width:17px;height:15px;display:grid;place-items:center}`,
  () => `<div class="side"><button aria-label="关闭面板"><svg width="7" height="7">${L('M1 1l5 5M6 1L1 6', '#333', 1.400)}</svg></button></div><div class="col"><div class="bar">
<tool-button icon="first" title="首行" disabled></tool-button><tool-button icon="prev" title="上一行" disabled></tool-button><tool-button icon="next" title="下一行"></tool-button><tool-button icon="last" title="末行"></tool-button><tool-sep></tool-sep><tool-button icon="up" title="上移" disabled></tool-button><tool-button icon="down" title="下移"></tool-button><tool-sep></tool-sep><tool-button icon="insrow" disabled>插入</tool-button><tool-button icon="delrow" disabled>删除</tool-button><tool-button icon="scale" disabled>缩尺配筋</tool-button><tool-button icon="info">钢筋信息</tool-button><tool-button icon="lib">钢筋图库</tool-button><tool-button icon="other" drop="tight">其他</tool-button><tool-button>关闭</tool-button><tool-sep></tool-sep><span class="total">单构件钢筋总重(kg)：27.628</span></div>
<div class="frame"><rebar-table></rebar-table><div class="scroll"><button aria-label="向左"><svg width="6" height="8">${L('M5 0L1 4l4 4', '#444', 1.800)}</svg></button><div class="thumb"></div><button aria-label="向右"><svg width="6" height="8">${L('M1 0l4 4-4 4', '#444', 1.800)}</svg></button></div></div></div>`);

component('status-bar', `:host{display:grid;grid-template-columns:148px 78px 98px 48px 1fr 70px;gap:2px;height:22px;padding-top:2px;flex:none;background:#fdfdfd}
span.c{border:1px solid #d7d7d7;background:linear-gradient(#fbfbfb,#f1f1f1);padding-left:1px;line-height:18px;white-space:nowrap;overflow:hidden}${mono}`,
  () => ['X=109944 Y=-12424', '层高:2.8m', '底标高:20.35m', '1(1)', '', '283 FPS'].map(t => `<span class="c">${simsun(t)}</span>`).join(''));

const clover = [0, 90, 180, 270].map(a => `<path d="M12 12V6a4 4 0 0 0-4-4q-6 0-6 5 0 5 5 5z" transform="rotate(${a} 12 12)" fill="#e8e8e8" stroke="#000c10"/>`).join('');
const eIcon = (c, w, extra) => `<svg width="28" height="28" viewBox="1 1 24 24">${L('M6 13.500h15q0-8-7.500-8T6 13.500t8 7.500q4 0 6-2.500', c, w)}${extra}</svg>`;
component('task-bar', `:host{display:flex;height:40px;flex:none;background:#000c10;color:#fff;align-items:stretch}
button{display:grid;place-items:center;color:inherit;flex:none}.start{width:48px;background:#000}
label{display:flex;flex:0 1 344px;background:#333;align-items:center;gap:5px;padding:0 13px 0 8px}
input{flex:1;min-width:0;border:0;background:none;outline:0;padding:0;font-size:14px;color:#aaa}input::placeholder{color:#a0a0a0;opacity:1}
.a{width:48px}.b{width:51px}.d{width:49px}.sep{width:3px;height:16px;border:solid #444;border-width:0 1px;align-self:center;margin:0 13px 0 7px}
.run{box-shadow:inset 0 -2px #76b9ed}.on{background:#343f42}
.tray{margin-left:auto;display:flex;align-items:center;flex:none}.tray>*{flex:none}.tray .sep{margin:0 9px 0 0}
.clock{text-align:center;width:60px;line-height:19px}.note{width:56px;height:40px;background:#000;border-right:1px solid #555;margin-right:4px}
.up{margin-right:31px}.state{margin-right:4px}.ime{margin-right:16px}`,
  () => `<button class="start" aria-label="开始"><svg width="17" height="17">${F('M0 2.500l7-1V8H0zM8 1.300L17 0v8H8zM0 9h7v6.500l-7-1zM8 9h9v8l-9-1.300z', '#fff')}</svg></button>
<label><svg width="23" height="23">${C(11.500, 11.500, 9, 'none', '#fff', 3)}</svg><input type="text" placeholder="在这里输入你要搜索的内容" aria-label="搜索"><svg width="12" height="18" fill="none" stroke="#a0a0a0"><rect x="3.500" y=".5" width="5" height="11" rx="1"/><path d="M.500 7v6.500h11V7M6 14v3M3.500 17.500h5"/></svg></label>
<button class="a" aria-label="任务视图"><svg width="21" height="16">${L('M5 1.500h11v13H5zM3 3.500H.700v9H3M18 3.500h2.300v9H18', '#fff', 1.300)}</svg></button>
<button class="b" aria-label="应用"><svg width="24" height="24">${clover}</svg></button>
<button class="b" aria-label="浏览器">${eIcon('#e4e4e4', 4, L('M4 23q-4-2 4-10T22 3q3 1 1 4', '#e4e4e4', 1.600))}</button>
<button class="b" aria-label="通知"><svg width="30" height="30">${L('M20 20a8.500 8.500 0 1 1-2-12M17 13a5 5 0 1 0 1 5M14 14a2.500 2.500 0 1 0 1 3', '#ddd', 1.500)}${F('M15 12q2-1 2-5 0-4 5-5 5 1 5 5 0 4 2 5zM20 13h4l-2 2z', '#e0a010')}</svg></button>
<span class="sep"></span>
<button class="d" aria-label="Edge">${eIcon('#0a78d7', 4.500, '')}</button>
<button class="d" aria-label="IE">${eIcon('#3aa5e8', 4, L('M4 24q-5-2 4-11T22 2q3 1 1 4', '#f3c63a', 2))}</button>
<button class="d" aria-label="资源管理器"><svg width="22" height="19">${F('M0 1h7l2 2h13v15H0z', '#fbe08a')}${F('M4 18v-7h14v7h-4v-4H8v4z', '#38a0dc')}</svg></button>
<button class="d run" aria-label="浏览器"><svg width="24" height="24">${C(12, 12, 10, '#5cc332', '#dff2d6', 1.500)}${L('M7 12h10q0-5-5-5t-5 5 5 5q3 0 4-2', '#fff', 2.400)}${L('M3 22q-2-2 2-7M17 3q5-3 5 2', '#3da61e', 1.500)}</svg></button>
<button class="d run" aria-label="广联达"><svg width="24" height="24">${L('M19 4Q8 1 4 9t4 11 11-1 0-8q-4-2-7 1', '#1b9df0', 4.500)}${F('M17 2q4 3 7 1-1 4-6 4z', '#1b9df0')}</svg></button>
<button class="d run on" aria-label="GGJ2013"><svg width="24" height="24"><rect width="24" height="24" rx="4" fill="#0c93f4"/>${L('M12 6v10a3 3 0 0 1-5 1M5 10q0 3 3 3h11q0-3-3-3M12 6q3-1 4 1', '#fff', 2)}</svg></button>
<div class="tray"><span class="sep"></span><span>链接</span>
<svg class="up" width="30" height="20">${L('M13 13l5-6 5 6', '#fff', 1.300)}</svg>
<svg class="state" width="120" height="24">${L('M6.500 8.500h10v7H5M17.500 10v4M1 8.500h4M1.500 9v3h3V9M2 7V5.500M4 7V5.500M3 12v3h3', '#fff', 1.200)}${R(8, 10, 7, 4, '#fff')}
${L('M28 19q0-10 11-11M31 19q0-7 8-7M34 19q0-4 5-4', '#bbb', 1.300)}${C(37.500, 18, 1.500, '#fff')}
${L('M49.500 10h2.500l4-4v12l-4-4h-2.500zM58.500 9q2 3 0 6M60.500 7q4 5 0 10', '#ddd', 1.200)}
${L('M72.500 6.500h21v12h-21z', '#fff', 1.200)}${L('M75 9.500h17M75 12.500h17', '#fff', 1.300, 'stroke-dasharray="1.500 1"')}${L('M77 15.500h12', '#fff', 1.300)}
${L('M104.500 19l5.500-13 5.500 13M106.500 15h7', '#fff', 1.800)}</svg>
<svg class="ime" width="16" height="16" viewBox="0 0 16 16">${F('M1 3l12-2 2 12-12 2z', '#f4511e')}${L('M12 4Q4 4 5 7t6 2-6 3', '#fff', 2)}</svg>
<div class="clock">16:10<br>2018/8/2</div>
<button class="note" aria-label="通知中心"><svg width="28" height="28">${F('M2 4h16v12H10l-4 4v-4H2z', '#fff')}${L('M5 7.500h10M5 10.500h10', '#000')}${C(18, 18, 8, '#444', '#888')}${L('M15.500 16l3-2v8.500M16 22.500h5', '#fff', 1.500)}</svg></button></div>`);
</script>
</body>
</html>
